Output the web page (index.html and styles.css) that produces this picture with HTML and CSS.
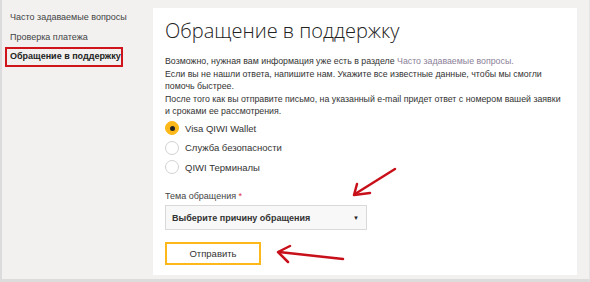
FILE: index.html
```html
<!DOCTYPE html>
<html lang="ru">
<head>
    <meta charset="UTF-8">
    <title>Обращение в поддержку</title>
    <link rel="stylesheet" href="styles.css">
</head>
<body>
    <div class="frame">
        <nav class="sidebar">
            <a href="#" class="side-link">Часто задаваемые вопросы</a>
            <a href="#" class="side-link">Проверка платежа</a>
            <a href="#" class="side-link active">Обращение в поддержку</a>
        </nav>

        <main class="panel">
            <h1>Обращение в поддержку</h1>
            <p class="intro">
                Возможно, нужная вам информация уже есть в разделе <a href="#">Часто задаваемые вопросы.</a><br>
                Если вы не нашли ответа, напишите нам. Укажите все известные данные, чтобы мы смогли<br>
                помочь быстрее.<br>
                После того как вы отправите письмо, на указанный e-mail придет ответ с номером вашей заявки<br>
                и сроками ее рассмотрения.
            </p>

            <div class="radios">
                <label class="radio checked"><span class="dot"></span>Visa QIWI Wallet</label>
                <label class="radio"><span class="dot"></span>Служба безопасности</label>
                <label class="radio"><span class="dot"></span>QIWI Терминалы</label>
            </div>

            <div class="field-label">Тема обращения <span class="req">*</span></div>
            <div class="select">
                <span>Выберите причину обращения</span>
                <span class="caret">&#9660;</span>
            </div>

            <button class="submit">Отправить</button>
        </main>

        <!-- annotation arrows -->
        <svg class="arrows" width="590" height="282" viewBox="0 0 590 282">
            <g stroke="#c8101a" stroke-width="2.5" fill="none" stroke-linecap="round" stroke-linejoin="round">
                <line x1="395" y1="169" x2="355" y2="194"/>
                <polyline points="357,184 354,195 370,193"/>
                <line x1="343" y1="259" x2="279" y2="252"/>
                <polyline points="290,246 278,252 288,262"/>
            </g>
        </svg>
    </div>
</body>
</html>
```

FILE: styles.css
```css
* {
    margin: 0;
    padding: 0;
    box-sizing: border-box;
}

body {
    font-family: 'Liberation Sans', Arial, sans-serif;
    color: #333;
    background-color: #f2f1f0;
}

.frame {
    position: relative;
    display: flex;
    width: 590px;
    height: 282px;
    border-left: 2px solid #dcdcdc;
    border-bottom: 3px solid #dcdcdc;
    border-right: 1px solid #e4e4e4;
    overflow: hidden;
}

.sidebar {
    width: 151px;
    flex-shrink: 0;
    display: flex;
    flex-direction: column;
    padding: 8px 0 0 3px;
}

.side-link {
    display: block;
    white-space: nowrap;
    font-size: 9px;
    line-height: 15.5px;
    color: #444;
    text-decoration: none;
    padding: 0 3px;
    width: 118px;
    border: 2px solid transparent;
}

.side-link.active {
    font-weight: bold;
    color: #222;
    border-color: #d0141c;
}

.panel {
    flex: 1;
    background-color: white;
    margin: 8px 12px 4px 0;
    padding: 8px 0 0 12px;
    white-space: nowrap;
}

h1 {
    font-family: 'Open Sans', sans-serif;
    font-size: 20px;
    font-weight: 300;
    color: #222;
    line-height: 30px;
}

.intro {
    margin-top: 9px;
    font-size: 8.8px;
    line-height: 12.5px;
    color: #333;
}

.intro a {
    color: #8b7f98;
    text-decoration: none;
}

.radios {
    margin-top: 1px;
    display: flex;
    flex-direction: column;
}

.radio {
    display: flex;
    align-items: center;
    height: 19.5px;
    font-size: 9.5px;
    color: #333;
}

.dot {
    width: 14px;
    height: 14px;
    border-radius: 50%;
    border: 1px solid #d2d2d2;
    background-color: white;
    margin-right: 6px;
    display: flex;
    align-items: center;
    justify-content: center;
}

.radio.checked .dot {
    background-color: #ffb819;
    border-color: #ffb819;
}

.radio.checked .dot::after {
    content: "";
    width: 5px;
    height: 5px;
    border-radius: 50%;
    background-color: #222;
}

.field-label {
    margin-top: 14px;
    font-size: 9px;
    line-height: 11px;
    color: #444;
}

.req {
    color: #e0303a;
}

.select {
    margin-top: 3px;
    width: 202px;
    height: 25px;
    border: 1px solid #d9d9d9;
    background-color: #f8f8f8;
    display: flex;
    align-items: center;
    justify-content: space-between;
    padding: 0 7px 0 6px;
    font-size: 9px;
    font-weight: bold;
    color: #333;
}

.caret {
    font-size: 6px;
    color: #222;
}

.submit {
    display: block;
    margin-top: 12px;
    width: 96px;
    height: 23px;
    background-color: white;
    border: 2px solid #ffb819;
    font-family: 'Liberation Sans', Arial, sans-serif;
    font-size: 9.5px;
    color: #333;
}

.arrows {
    position: absolute;
    left: -2px;
    top: 0;
    pointer-events: none;
}
```
